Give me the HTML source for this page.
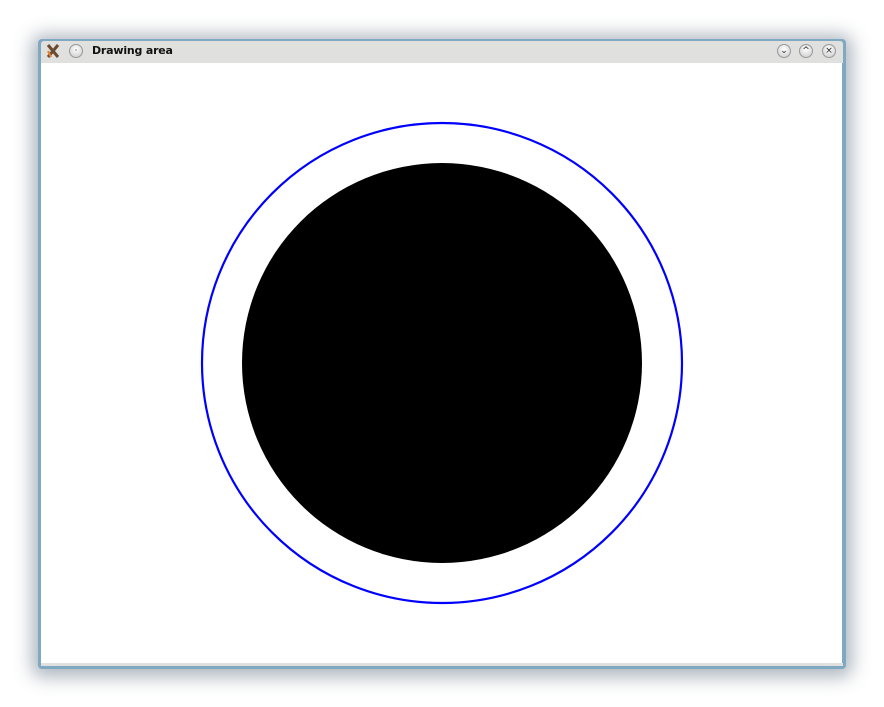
<!DOCTYPE html>
<html><head><style>
body{margin:0;width:884px;height:707px;background:#fff;position:relative;overflow:hidden;font-family:"DejaVu Sans","Liberation Sans",sans-serif}
.win{position:absolute;left:38px;top:39px;width:808px;height:630px;background:#7fa9c0;border-radius:4px;box-shadow:0 2px 18px 6px rgba(70,90,110,.45)}
.title{position:absolute;left:41px;top:41px;width:802px;height:22px;background:#e0e0de;border-radius:3px 3px 0 0}
.content{position:absolute;left:41px;top:63px;width:801px;height:600px;background:#fff}
.bottom{position:absolute;left:41px;top:663px;width:802px;height:3px;background:#e0e0de}
.t{position:absolute;left:92px;top:44px;font-size:11px;font-weight:bold;color:#111;letter-spacing:-0.2px}
.b{position:absolute;top:44px;width:14px;height:14px;border-radius:50%;background:radial-gradient(circle at 50% 35%,#fff,#c8c8c8);border:1px solid #999;box-sizing:border-box;font-size:9px;line-height:12px;text-align:center;color:#222}
</style></head><body>
<div class="win"></div>
<div class="title"></div>
<div class="content"></div>
<div class="bottom"></div>
<svg style="position:absolute;left:45px;top:43px" width="16" height="16"><path d="M3 2 L13 14 M13 2 L3 14" stroke="#6a4a30" stroke-width="3"/><path d="M3 8 L6 14" stroke="#e08030" stroke-width="2"/></svg>
<div class="b" style="left:69px">·</div>
<div class="t">Drawing area</div>
<div class="b" style="left:777px">⌄</div>
<div class="b" style="left:799px">^</div>
<div class="b" style="left:822px">×</div>
<svg style="position:absolute;left:0;top:0" width="884" height="707"><circle cx="442" cy="363" r="240" fill="none" stroke="#0000ff" stroke-width="2.2"/><circle cx="442" cy="363" r="200" fill="#000"/></svg>
</body></html>
